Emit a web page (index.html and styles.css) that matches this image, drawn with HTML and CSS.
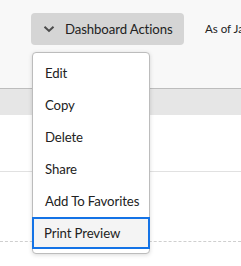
FILE: index.html
```html
<!DOCTYPE html>
<html>
<head>
<meta charset="utf-8">
<link rel="stylesheet" href="styles.css">
</head>
<body>
<div class="page">
  <div class="top">
    <button class="btn">
      <svg class="chev" width="12" height="8" viewBox="0 0 12 8"><path d="M1.5 1.8 L6 6 L10.5 1.8" fill="none" stroke="#4b4b4b" stroke-width="2"/></svg>
      <span>Dashboard Actions</span>
    </button>
    <span class="asof">As of January</span>
  </div>
  <div class="band"></div>
  <div class="row"></div>
  <div class="row2"></div>
  <ul class="menu">
    <li class="item">Edit</li>
    <li class="item">Copy</li>
    <li class="item">Delete</li>
    <li class="item">Share</li>
    <li class="item">Add To Favorites</li>
    <li class="item focus">Print Preview</li>
  </ul>
</div>
</body>
</html>
```
FILE: styles.css
```css
html, body { margin: 0; padding: 0; }
body { background: #fff; font-family: Lato, "Noto Sans", sans-serif; color: #222; overflow: hidden; }
.page { position: relative; width: 241px; height: 266px; overflow: hidden; }
.top { height: 88px; background: #f8f8f8; box-sizing: border-box; padding: 13px 0 0 31px; display: flex; align-items: flex-start; white-space: nowrap; overflow: hidden; }
.btn { height: 32px; width: 153px; flex: none; border: 0; border-radius: 4px; background: #d5d5d5; display: flex; align-items: center; padding: 0 0 0 12px; font-family: inherit; font-size: 13.2px; letter-spacing: -0.1px; color: #222; box-sizing: border-box; }
.chev { margin-right: 10px; }
.asof { margin-left: 21px; line-height: 32px; font-size: 11.5px; color: #222; }
.band { height: 26px; border-top: 1px solid #bdbdbd; background: #e6e6e6; }
.row { height: 56px; border-bottom: 1px solid #e1e1e1; }
.row2 { height: 69px; border-bottom: 1px dashed #cfcfcf; }
.menu { position: absolute; left: 32px; top: 52px; width: 118px; margin: 0; padding: 4px 0; list-style: none; background: #fff; border: 1px solid #bcbcbc; border-radius: 4px; box-sizing: border-box; box-shadow: 0 1px 4px rgba(0,0,0,0.15); }
.item { height: 32px; line-height: 32px; padding-left: 12px; font-size: 13.2px; letter-spacing: -0.1px; color: #222; white-space: nowrap; box-sizing: border-box; }
.focus { background: #f4f4f4; border: 2px solid #1473e6; padding-left: 10px; line-height: 28px; margin: 0 -1px; }
```
